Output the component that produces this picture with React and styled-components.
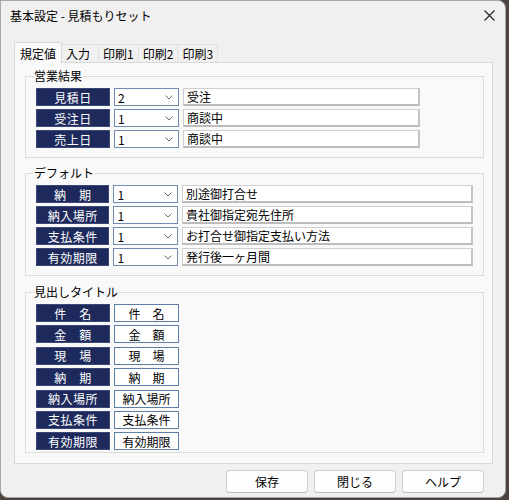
import React from "react";
import styled, { createGlobalStyle } from "styled-components";

const GlobalStyle = createGlobalStyle`
  html, body {
    margin: 0;
    padding: 0;
    background: #4d4440;
  }
  body {
    font-family: "Noto Sans CJK JP", "Noto Sans", sans-serif;
    font-size: 12px;
    color: #000;
  }
`;

const Window = styled.div`
  width: 504px;
  height: 496px;
  background: #f0f0f0;
  border: 1px solid #a8a8a8;
  border-radius: 0 8px 8px 8px;
  display: flex;
  flex-direction: column;
  overflow: hidden;
`;

const TitleBar = styled.div`
  height: 28px;
  display: flex;
  align-items: center;
  justify-content: space-between;
  padding: 0 9px 0 9px;
  font-size: 12px;
`;

const CloseButton = styled.div`
  width: 14px;
  height: 14px;
  display: flex;
  align-items: center;
  justify-content: center;
`;

const Tabs = styled.div`
  display: flex;
  align-items: flex-end;
  margin: 12px 0 0 13px;
  height: 21px;
`;

const Tab = styled.div`
  height: ${(p) => (p.$active ? "21px" : "18px")};
  padding: 0 ${(p) => (p.$active ? "5px" : "4px")};
  display: flex;
  align-items: center;
  background: ${(p) => (p.$active ? "#f9f9f9" : "#f0f0f0")};
  border: 1px solid ${(p) => (p.$active ? "#d9d9d9" : "#e2e2e2")};
  border-bottom: none;
  border-left: ${(p) => (p.$active ? "1px solid #d9d9d9" : "none")};
  position: relative;
  z-index: ${(p) => (p.$active ? 1 : 0)};
  margin-bottom: ${(p) => (p.$active ? "-1px" : "0")};
  font-size: 12px;
  box-sizing: border-box;
`;

const Panel = styled.div`
  margin: 0 0 0 13px;
  width: 479px;
  height: 402px;
  box-sizing: border-box;
  background: #f9f9f9;
  border: 1px solid #d9d9d9;
  padding: 5px 8px 0 10px;
  display: flex;
  flex-direction: column;
  gap: 1px;
`;

const Group = styled.fieldset`
  margin: ${(p) => p.$mt || 0}px 0 0 0;
  border: 1px solid #dcdcdc;
  padding: 4px 10px ${(p) => p.$pb || 9}px 10px;
  display: flex;
  flex-direction: column;
  gap: ${(p) => p.$gap || 3}px;
  min-width: 0;
`;

const Legend = styled.legend`
  padding: 0 1px;
  margin-left: -3px;
  font-size: 12px;
  line-height: 16px;
`;

const Row = styled.div`
  display: flex;
  gap: 4px;
  height: 18px;
`;

const Label = styled.div`
  width: 74px;
  box-sizing: border-box;
  background: #1e2a5c;
  border: 1px solid #3b4776;
  color: #fff;
  display: flex;
  align-items: center;
  justify-content: center;
  font-size: 12px;
  white-space: pre;
  letter-spacing: 0.5px;
`;

const Select = styled.div`
  width: 65px;
  box-sizing: border-box;
  background: #fff;
  border: 1px solid #6f8db3;
  display: flex;
  align-items: center;
  justify-content: space-between;
  padding: 0 5px 0 3px;
  font-size: 12px;
`;

const TextInput = styled.div`
  width: ${(p) => p.$w}px;
  box-sizing: border-box;
  background: #fff;
  border: 1px solid #cfcfcf;
  border-bottom: 2px solid #bcbcbc;
  border-right: 2px solid #c4c4c4;
  display: flex;
  align-items: center;
  padding: 0 3px;
  font-size: 12px;
`;

const ValueBox = styled.div`
  width: 65px;
  box-sizing: border-box;
  background: #fff;
  border: 1px solid #5d7fa8;
  display: flex;
  align-items: center;
  justify-content: center;
  font-size: 12px;
  white-space: pre;
`;

const Footer = styled.div`
  display: flex;
  justify-content: flex-end;
  gap: 6px;
  padding: 6px 21px 0 0;
`;

const Button = styled.div`
  width: 82px;
  height: 23px;
  box-sizing: border-box;
  background: #fdfdfd;
  border: 1px solid #d0d0d0;
  border-bottom-color: #bcbcbc;
  border-radius: 4px;
  display: flex;
  align-items: center;
  justify-content: center;
  font-size: 12px;
`;

const Chevron = () => (
  <svg width="8" height="5" viewBox="0 0 8 5">
    <path d="M0.5 0.5 L4 4 L7.5 0.5" fill="none" stroke="#666" strokeWidth="1" />
  </svg>
);

const sales = [
  ["見積日", "2", "受注"],
  ["受注日", "1", "商談中"],
  ["売上日", "1", "商談中"],
];

const defaults = [
  ["納　期", "1", "別途御打合せ"],
  ["納入場所", "1", "貴社御指定宛先住所"],
  ["支払条件", "1", "お打合せ御指定支払い方法"],
  ["有効期限", "1", "発行後一ヶ月間"],
];

const titles = [
  ["件　名", "件　名"],
  ["金　額", "金　額"],
  ["現　場", "現　場"],
  ["納　期", "納　期"],
  ["納入場所", "納入場所"],
  ["支払条件", "支払条件"],
  ["有効期限", "有効期限"],
];

export default function App() {
  return (
    <>
      <GlobalStyle />
      <Window>
        <TitleBar>
          <span>基本設定 - 見積もりセット</span>
          <CloseButton>
            <svg width="11" height="11" viewBox="0 0 11 11">
              <path d="M0.5 0.5 L10.5 10.5 M10.5 0.5 L0.5 10.5" stroke="#222" strokeWidth="1.1" />
            </svg>
          </CloseButton>
        </TitleBar>
        <Tabs>
          <Tab $active>規定値</Tab>
          <Tab style={{ paddingRight: 8 }}>入力</Tab>
          <Tab>印刷1</Tab>
          <Tab>印刷2</Tab>
          <Tab>印刷3</Tab>
        </Tabs>
        <Panel>
          <Group>
            <Legend>営業結果</Legend>
            {sales.map(([l, v, t]) => (
              <Row key={l}>
                <Label>{l}</Label>
                <Select>
                  <span>{v}</span>
                  <Chevron />
                </Select>
                <TextInput $w={237}>{t}</TextInput>
              </Row>
            ))}
          </Group>
          <Group $mt={6}>
            <Legend>デフォルト</Legend>
            {defaults.map(([l, v, t]) => (
              <Row key={l}>
                <Label>{l}</Label>
                <Select>
                  <span>{v}</span>
                  <Chevron />
                </Select>
                <TextInput $w={293}>{t}</TextInput>
              </Row>
            ))}
          </Group>
          <Group $mt={7} $pb={2} $gap={3.4}>
            <Legend>見出しタイトル</Legend>
            {titles.map(([l, v]) => (
              <Row key={l}>
                <Label>{l}</Label>
                <ValueBox>{v}</ValueBox>
              </Row>
            ))}
          </Group>
        </Panel>
        <Footer>
          <Button>保存</Button>
          <Button>閉じる</Button>
          <Button>ヘルプ</Button>
        </Footer>
      </Window>
    </>
  );
}
